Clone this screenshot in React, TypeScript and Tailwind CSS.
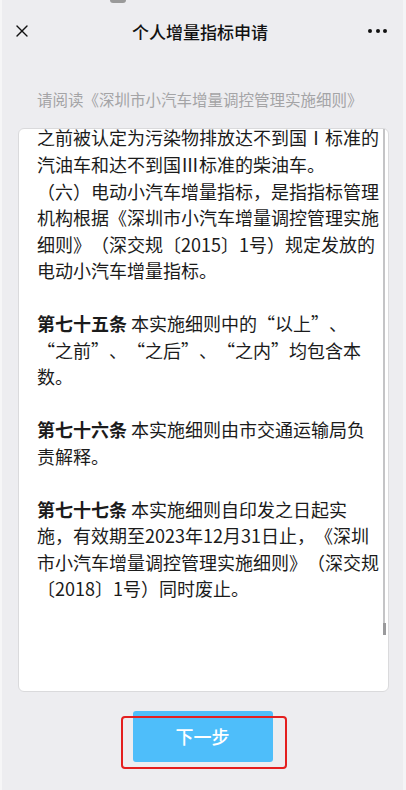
import { X } from 'lucide-react'

type Line = { bold?: string; text: string }

const lines: Line[] = [
  { text: '之前被认定为污染物排放达不到国Ⅰ标准的' },
  { text: '汽油车和达不到国Ⅲ标准的柴油车。' },
  { text: '（六）电动小汽车增量指标，是指指标管理' },
  { text: '机构根据《深圳市小汽车增量调控管理实施' },
  { text: '细则》（深交规〔2015〕1号）规定发放的' },
  { text: '电动小汽车增量指标。' },
  { text: '' },
  { bold: '第七十五条', text: ' 本实施细则中的“以上”、' },
  { text: '“之前”、“之后”、“之内”均包含本' },
  { text: '数。' },
  { text: '' },
  { bold: '第七十六条', text: ' 本实施细则由市交通运输局负' },
  { text: '责解释。' },
  { text: '' },
  { bold: '第七十七条', text: ' 本实施细则自印发之日起实' },
  { text: '施，有效期至2023年12月31日止，《深圳' },
  { text: '市小汽车增量调控管理实施细则》（深交规' },
  { text: '〔2018〕1号）同时废止。' },
]

export default function App() {
  return (
    <div
      className="relative flex h-[790px] w-[406px] flex-col overflow-hidden border-l-2 border-r-[3px] border-l-[#f6f6f7] border-r-[#f4f4f6] bg-[#ededf0] text-[#1b1b1b]"
      style={{ fontFamily: '"Noto Sans CJK SC", "Noto Sans", sans-serif' }}
    >
      <div className="ml-[108px] h-[3px] w-[16px] rounded-b-sm bg-[#9a9a9a]" />

      {/* nav bar */}
      <div className="flex h-[56px] items-center justify-between pl-[10px] pr-[16px]">
        <X className="h-[20px] w-[20px] text-[#111]" strokeWidth={1.6} aria-hidden="true" />
        <span className="text-[17px] font-medium leading-none text-[#111]">个人增量指标申请</span>
        <div className="flex items-center gap-[3.5px]">
          <span className="h-[4px] w-[4px] rounded-full bg-[#111]" />
          <span className="h-[4px] w-[4px] rounded-full bg-[#111]" />
          <span className="h-[4px] w-[4px] rounded-full bg-[#111]" />
        </div>
      </div>

      <p className="mt-[29px] pl-[35px] text-[15.5px] leading-[22px] text-[#a4a4a6] [text-spacing-trim:space-all]">
        请阅读《深圳市小汽车增量调控管理实施细则》
      </p>

      {/* document card */}
      <div className="relative ml-[16px] mr-[14px] mt-[18px] h-[564px] rounded-[6px] border border-[#dadadc] bg-white">
        <div className="pl-[18px] text-[18px] [text-spacing-trim:space-all]">
          {lines.map((line, i) => (
            <div
              key={i}
              className={
                i === 0
                  ? 'h-[22px] whitespace-nowrap leading-[17.4px]'
                  : 'h-[26.5px] whitespace-nowrap leading-[26.5px]'
              }
            >
              {line.bold ? <span className="font-bold">{line.bold}</span> : null}
              {line.text}
            </div>
          ))}
        </div>
        <div className="absolute right-[3px] top-0 h-[494px] w-[2px] bg-[#c4c4c6]" />
        <div className="absolute right-[2.5px] top-[494px] h-[12px] w-[3px] bg-[#9a9a9c]" />
      </div>

      {/* next button */}
      <div className="relative mt-[19px] flex justify-center">
        <button
          type="button"
          className="h-[51px] w-[140px] rounded-[3px] bg-[#4ebefa] text-[18px] font-medium text-white"
        >
          下一步
        </button>
        <div className="pointer-events-none absolute left-[119px] top-[5px] h-[53px] w-[166px] rounded-[4px] border-[2.5px] border-[#e41f1f]" />
      </div>
    </div>
  )
}
